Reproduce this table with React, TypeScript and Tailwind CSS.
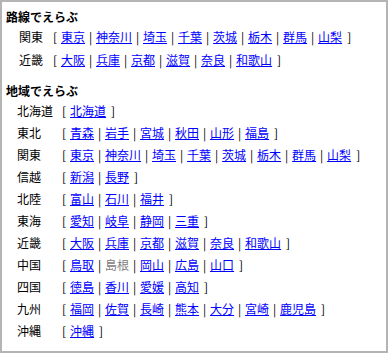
import React from "react";

type Item = { name: string; disabled?: boolean };
type Row = { label: string; items: Item[] };

const mk = (s: string, disabled: string[] = []): Item[] =>
  s.split(",").map((n) => ({ name: n, disabled: disabled.includes(n) }));

const routeRows: Row[] = [
  { label: "関東", items: mk("東京,神奈川,埼玉,千葉,茨城,栃木,群馬,山梨") },
  { label: "近畿", items: mk("大阪,兵庫,京都,滋賀,奈良,和歌山") },
];

const areaRows: Row[] = [
  { label: "北海道", items: mk("北海道") },
  { label: "東北", items: mk("青森,岩手,宮城,秋田,山形,福島") },
  { label: "関東", items: mk("東京,神奈川,埼玉,千葉,茨城,栃木,群馬,山梨") },
  { label: "信越", items: mk("新潟,長野") },
  { label: "北陸", items: mk("富山,石川,福井") },
  { label: "東海", items: mk("愛知,岐阜,静岡,三重") },
  { label: "近畿", items: mk("大阪,兵庫,京都,滋賀,奈良,和歌山") },
  { label: "中国", items: mk("鳥取,島根,岡山,広島,山口", ["島根"]) },
  { label: "四国", items: mk("徳島,香川,愛媛,高知") },
  { label: "九州", items: mk("福岡,佐賀,長崎,熊本,大分,宮崎,鹿児島") },
  { label: "沖縄", items: mk("沖縄") },
];

function Links({ items }: { items: Item[] }) {
  return (
    <>
      <span className="inline-block w-[8px]">[</span>
      {items.map((it, i) => (
        <React.Fragment key={it.name + i}>
          {i > 0 && <span className="inline-block w-[11px] text-center">|</span>}
          {it.disabled ? (
            <span className="text-[#808080]">{it.name}</span>
          ) : (
            <a href="#" className="text-[#0000ff] underline underline-offset-[1px]">
              {it.name}
            </a>
          )}
        </React.Fragment>
      ))}
      <span className="ml-[5px]">]</span>
    </>
  );
}

export default function App() {
  return (
    <div
      className="w-[388px] h-[353px] box-border border-2 border-[#b4b4b4] bg-white text-black text-[12px] pt-[6px] overflow-hidden"
      style={{ fontFamily: '"Noto Sans CJK JP", "Noto Sans", sans-serif' }}
    >
      <div className="h-[17px] leading-[17px] pl-[4px] font-bold whitespace-nowrap">路線でえらぶ</div>
      {routeRows.map((r) => (
        <div key={r.label} className="h-[23px] flex items-center pl-[17px] whitespace-nowrap">
          <span className="inline-block w-[34px]">{r.label}</span>
          <Links items={r.items} />
        </div>
      ))}
      <div className="mt-[11px] h-[18px] leading-[18px] pl-[4px] font-bold whitespace-nowrap">地域でえらぶ</div>
      {areaRows.map((r) => (
        <div key={r.label} className="h-[22px] flex items-center pl-[15px] whitespace-nowrap">
          <span className="inline-block w-[45px]">{r.label}</span>
          <Links items={r.items} />
        </div>
      ))}
    </div>
  );
}
